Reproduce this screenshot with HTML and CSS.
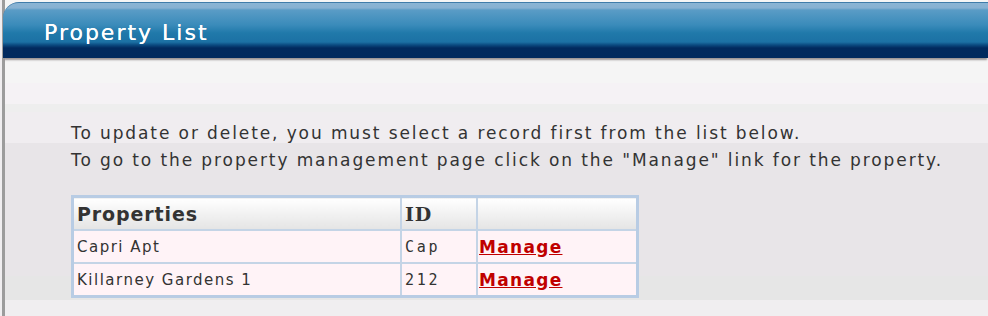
FILE: index.html
```html
<!DOCTYPE html>
<html lang="en">
<head>
  <meta charset="UTF-8">
  <title>Property List</title>
  <link rel="stylesheet" href="styles.css">
</head>
<body>

<div class="panel">
  <div class="panel-head">Property List</div>
  <div class="panel-body">
    <p class="intro">
      To update or delete, you must select a record first from the list below.<br>
      To go to the property management page click on the "Manage" link for the property.
    </p>

    <table class="grid">
      <tr>
        <th class="col-name">Properties</th>
        <th class="col-id">ID</th>
        <th class="col-link"></th>
      </tr>
      <tr>
        <td>Capri Apt</td>
        <td class="mono">Cap</td>
        <td><a href="#">Manage</a></td>
      </tr>
      <tr>
        <td>Killarney Gardens 1</td>
        <td class="mono">212</td>
        <td><a href="#">Manage</a></td>
      </tr>
    </table>
  </div>
</div>

</body>
</html>
```
FILE: styles.css
```css
body {
  margin: 0;
  background: #f0eef0;
  font-family: "DejaVu Sans", Verdana, sans-serif;
  color: #333;
}
.panel {
  margin-left: 2px;
  padding-top: 2px;
  border-left: 3px solid #9c9c9c;
  height: 314px;
  background: linear-gradient(#f5f5f5 0, #f5f5f5 83px, #f5f2f5 83px, #f5f2f5 104px, #eeeeee 104px, #eeeeee 112px, #f0edf0 112px, #f0edf0 143px, #e8e5e8 143px, #e8e5e8 276px, #e6e6e6 276px, #e6e6e6 300px, #f0eef0 300px);
}
.panel-head {
  height: 55px;
  margin-left: -2px;
  border-top: 1px solid #3f7caa;
  border-top-left-radius: 16px;
  box-shadow: 0 3px 2px -1px #9a9494;
  padding-left: 41px;
  line-height: 60px;
  font-size: 22px;
  letter-spacing: 2px;
  color: #fff;
  text-shadow: 0 0 0.5px #fff;
  background: linear-gradient(#8ab4d4 0, #86b1d2 5px, #5a9cc6 7px, #3a8bba 22px, #2079aa 30px, #1c71a4 39px, #0b4a80 42px, #012a5e 45px, #002a5e 55px);
}
.panel-body {
  padding: 62px 0 0 66px;
}
.intro {
  margin: 0 0 21px;
  font-size: 17px;
  letter-spacing: 1.9px;
  line-height: 27px;
}
.grid {
  border-collapse: collapse;
  border: 3px solid #b8cce4;
}
.grid th,
.grid td {
  border: 2px solid #c4d4e6;
  height: 31px;
  padding: 0 3px;
  text-align: left;
}
.grid th {
  font-size: 19px;
  letter-spacing: 0.9px;
  background: linear-gradient(#ffffff, #e4e4e4);
}
.grid td {
  font-size: 15px;
  letter-spacing: 1.5px;
  background: #fff3f7;
}
.col-name { width: 320px; }
.col-id { width: 68px; font-family: "DejaVu Serif", serif; letter-spacing: 1px; }
.col-link { width: 152px; }
.grid td.mono {
  font-family: "DejaVu Sans Mono", monospace;
  letter-spacing: 2.7px;
}
.grid a {
  color: #c00000;
  font-weight: bold;
  font-size: 17px;
  letter-spacing: 1.3px;
  margin-left: -2px;
}
```
